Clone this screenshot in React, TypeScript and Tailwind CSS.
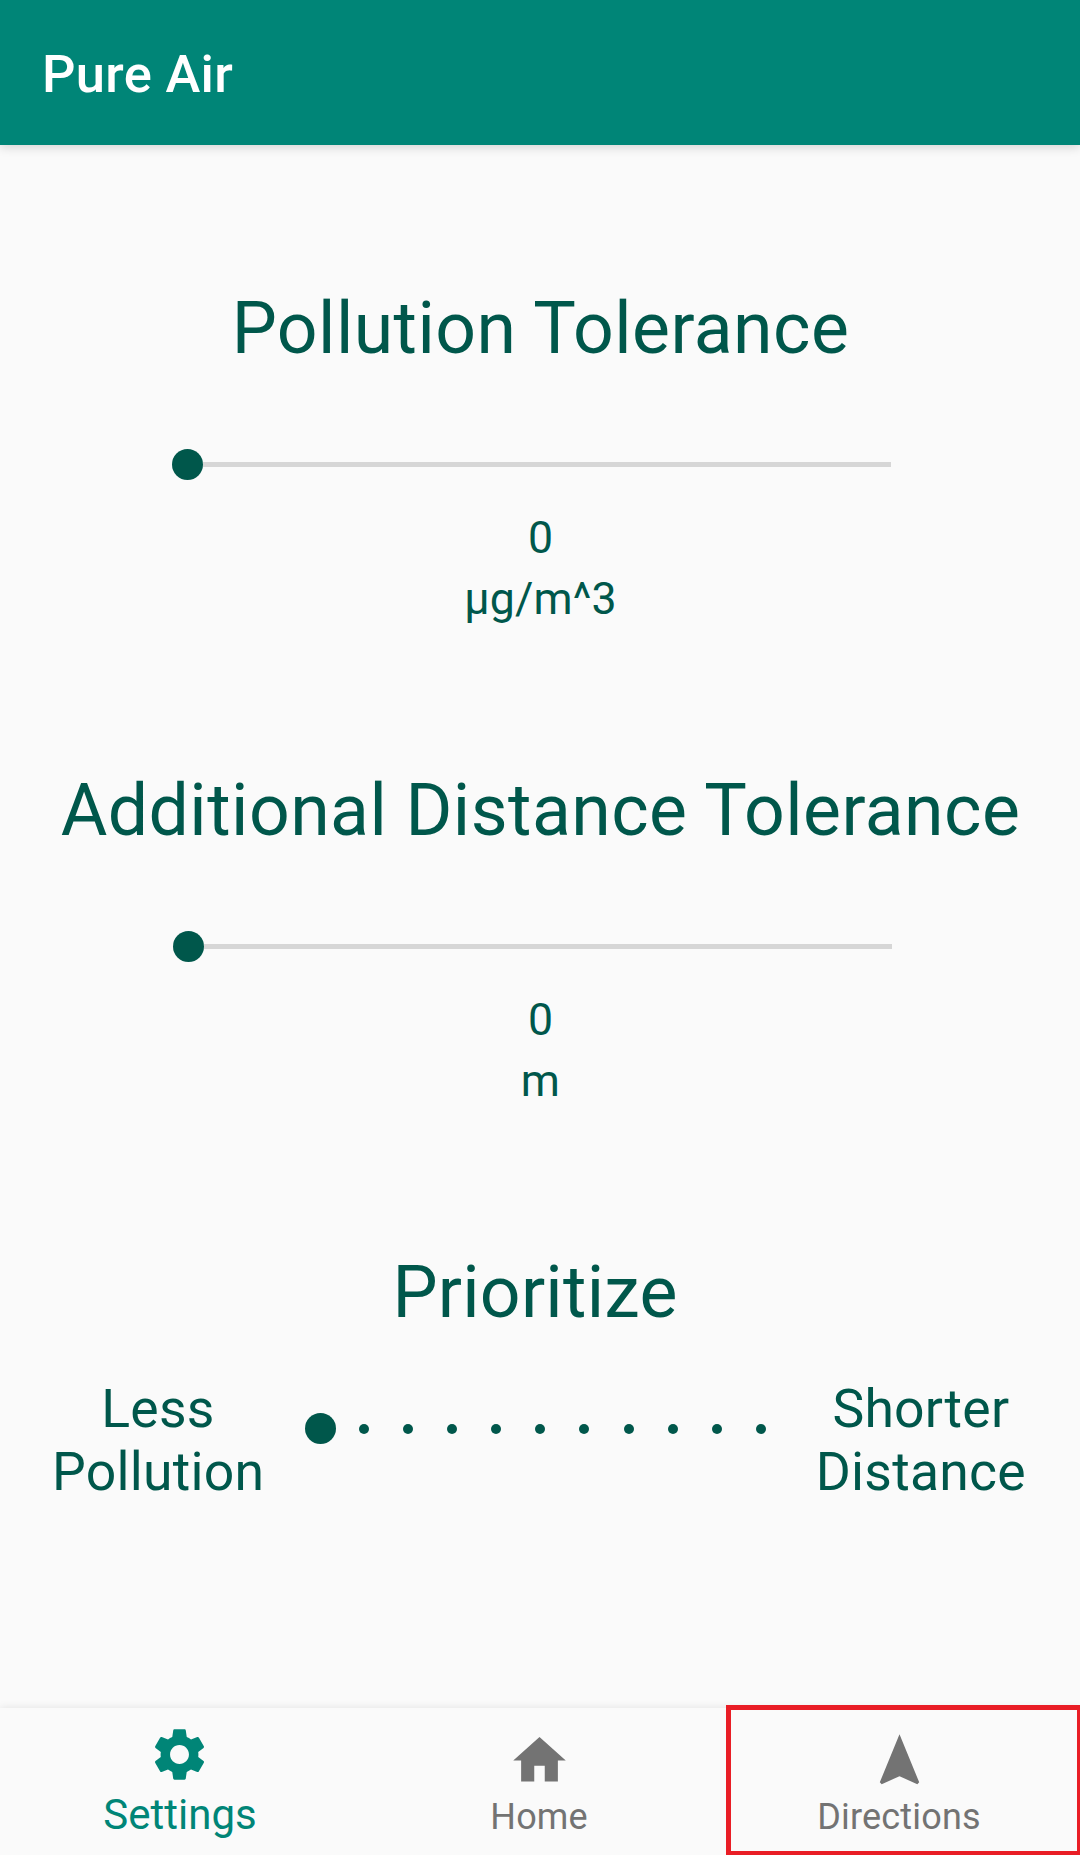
import type { ReactNode } from "react";

const PRIORITY_STEPS = Array.from({ length: 10 }, (_, i) => i);

function ToleranceSection({
  title,
  unit,
  value,
  sliderClass,
}: {
  title: string;
  unit: string;
  value: number;
  sliderClass: string;
}) {
  return (
    <section className="flex h-[482px] flex-col items-center">
      <h2 className="ml-[1px] h-[84px] text-[71.5px] leading-[84px] tracking-[0.46px] whitespace-nowrap">{title}</h2>
      <div className={sliderClass}>
        <span className="size-[31px] shrink-0 rounded-full bg-[#00574b]" />
        <span className="h-[5px] flex-1 bg-[#d6d6d6]" />
      </div>
      <div className="mt-[32px] ml-[1px] flex flex-col gap-[9px] text-center text-[44.6px] leading-[52px] tracking-[0.15px]">
        <span>{value}</span>
        <span>{unit}</span>
      </div>
    </section>
  );
}

function NavIcon({ d }: { d: string }) {
  return (
    <svg viewBox="0 0 24 24" className="mr-[2px] size-[63px] fill-current">
      <path d={d} />
    </svg>
  );
}

function NavItem({ className, children }: { className: string; children: ReactNode }) {
  return <button className={className}>{children}</button>;
}

export default function App() {
  return (
    <div className="flex h-[1855px] w-[1080px] flex-col overflow-hidden bg-[#fafafa] font-['Roboto',sans-serif] text-[#00574b]">
      <header className="flex h-[145px] shrink-0 items-center bg-[#008577] pt-[2px] pl-[42px] shadow-[0_2px_10px_rgba(0,0,0,0.16)]">
        <h1 className="text-[52.5px] leading-[62px] font-medium tracking-[0.3px] text-white">Pure Air</h1>
      </header>

      <main className="flex flex-1 flex-col pt-[142px]">
        <ToleranceSection
          title="Pollution Tolerance"
          value={0}
          unit="µg/m^3"
          sliderClass="mt-[78px] mr-[17px] flex w-[719px] items-center"
        />
        <ToleranceSection
          title="Additional Distance Tolerance"
          value={0}
          unit="m"
          sliderClass="mt-[78px] mr-[15px] flex w-[719px] items-center"
        />
        <section className="flex flex-col items-center">
          <h2 className="mr-[10px] h-[84px] text-[71.5px] leading-[84px] tracking-[0.25px]">Prioritize</h2>
          <div className="mt-[42px] flex w-full items-start pl-[52px] text-center text-[53.5px] leading-[63px] tracking-[0.25px]">
            <p className="w-[212px]">
              Less
              <br />
              Pollution
            </p>
            <div className="mt-[36px] ml-[41px] flex items-center">
              <span className="size-[31px] rounded-full bg-[#00574b]" />
              <div className="mt-px ml-[23px] flex gap-[34.1px]">
                {PRIORITY_STEPS.map((step) => (
                  <span key={step} className="size-[10px] rounded-full bg-[#00574b]" />
                ))}
              </div>
            </div>
            <p className="ml-[49px] w-[212px]">
              Shorter
              <br />
              Distance
            </p>
          </div>
        </section>
      </main>

      <nav className="relative grid h-[147px] shrink-0 grid-cols-3 bg-[#fafafa] shadow-[0_0_8px_rgba(0,0,0,0.1)]">
        <NavItem className="flex flex-col items-center pt-[15px] text-[#008577]">
          <NavIcon d="M19.14,12.94c0.04-0.3,0.06-0.61,0.06-0.94c0-0.32-0.02-0.64-0.07-0.94l2.03-1.58c0.18-0.14,0.23-0.41,0.12-0.61l-1.92-3.32c-0.12-0.22-0.37-0.29-0.59-0.22l-2.39,0.96c-0.5-0.38-1.03-0.7-1.62-0.94L14.4,2.81c-0.04-0.24-0.24-0.41-0.48-0.41h-3.84c-0.24,0-0.43,0.17-0.47,0.41L9.25,5.35C8.66,5.59,8.12,5.92,7.63,6.29L5.24,5.33c-0.22-0.08-0.47,0-0.59,0.22L2.74,8.87C2.62,9.08,2.66,9.34,2.86,9.48l2.03,1.58C4.84,11.36,4.8,11.69,4.8,12s0.02,0.64,0.07,0.94l-2.03,1.58c-0.18,0.14-0.23,0.41-0.12,0.61l1.92,3.32c0.12,0.22,0.37,0.29,0.59,0.22l2.39-0.96c0.5,0.38,1.03,0.7,1.62,0.94l0.36,2.54c0.05,0.24,0.24,0.41,0.48,0.41h3.84c0.24,0,0.44-0.17,0.47-0.41l0.36-2.54c0.59-0.24,1.13-0.56,1.62-0.94l2.39,0.96c0.22,0.08,0.47,0,0.59-0.22l1.92-3.32c0.12-0.22,0.07-0.47-0.12-0.61L19.14,12.94z M12,15.6c-1.98,0-3.6-1.62-3.6-3.6s1.62-3.6,3.6-3.6s3.6,1.62,3.6,3.6S13.98,15.6,12,15.6z" />
          <span className="mt-[4px] text-[42px] leading-[50px]">Settings</span>
        </NavItem>
        <NavItem className="flex flex-col items-center pt-[21px] text-[#737373]">
          <NavIcon d="M10 20v-6h4v6h5v-8h3L12 3 2 12h3v8z" />
          <span className="mt-[3px] mr-[2px] text-[36px] leading-[44px] tracking-[0.1px]">Home</span>
        </NavItem>
        <NavItem className="flex flex-col items-center pt-[21px] text-[#737373]">
          <NavIcon d="M12 2L4.5 20.29l.71.71L12 18l6.79 3 .71-.71z" />
          <span className="mt-[3px] mr-[2px] text-[36px] leading-[44px] tracking-[0.2px]">Directions</span>
        </NavItem>
        <span className="pointer-events-none absolute -top-[3px] right-0 bottom-0 w-[354px] border-[5px] border-r-[3px] border-b-[4px] border-[#e91d25]" />
      </nav>
    </div>
  );
}
